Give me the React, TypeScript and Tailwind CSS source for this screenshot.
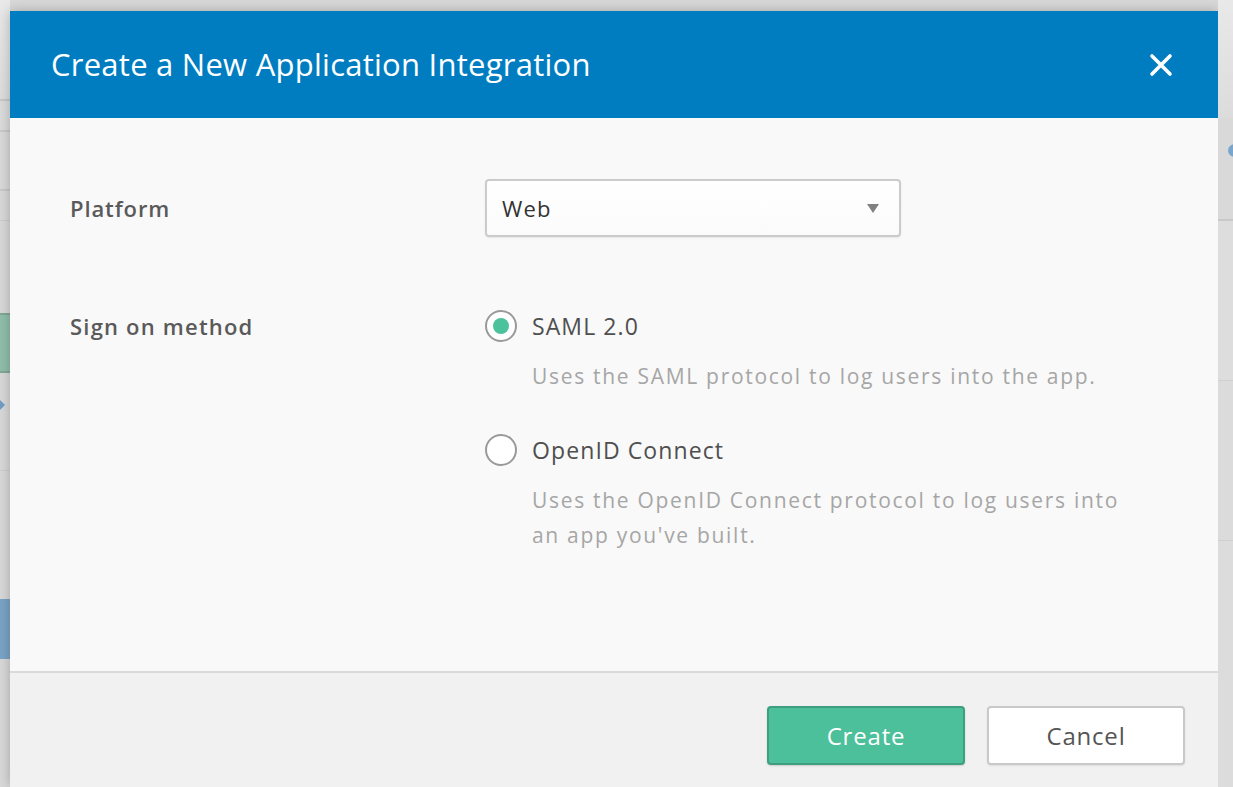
import { useState } from "react"

const options = [
  {
    id: "saml",
    label: "SAML 2.0",
    desc: "Uses the SAML protocol to log users into the app.",
  },
  {
    id: "oidc",
    label: "OpenID Connect",
    desc: "Uses the OpenID Connect protocol to log users into an app you've built.",
  },
]

function LeftStrip() {
  return (
    <div className="flex w-[10px] shrink-0 flex-col bg-[#d9d9d9]">
      <div className="h-[99px] bg-gradient-to-b from-[#e9e9e9] to-[#dedede]" />
      <div className="h-[2px] bg-[#c9c9c9]" />
      <div className="h-[29px] bg-[#dcdcdc]" />
      <div className="h-[2px] bg-[#c9c9c9]" />
      <div className="h-[57px] bg-[#dadada]" />
      <div className="h-[2px] bg-[#c9c9c9]" />
      <div className="h-[29px] bg-[#d9d9d9]" />
      <div className="h-px bg-[#cdcdcd]" />
      <div className="h-[92px]" />
      <div className="h-[60px] border-y-2 border-[#82a898] bg-[#91bfac]" />
      <div className="flex h-[97px] items-start pt-[26px]">
        <svg width="6" height="12" viewBox="0 0 6 12">
          <path d="M0 1 L5 6 L0 11 Z" fill="#6f9ec6" />
        </svg>
      </div>
      <div className="h-px bg-[#cecece]" />
      <div className="h-[128px]" />
      <div className="h-[60px] bg-[#7ba4c7]" />
      <div className="flex-1" />
    </div>
  )
}

function RightStrip() {
  return (
    <div className="flex w-[15px] shrink-0 flex-col overflow-hidden bg-[#d9d9d9]">
      <div className="h-[118px] bg-gradient-to-b from-[#e9e9e9] to-[#dcdcdc]" />
      <div className="flex h-[101px] items-start pt-[26px] pl-[10px]">
        <div className="h-[13px] w-[13px] shrink-0 rounded-full bg-[#7aa6cc]" />
      </div>
      <div className="h-[2px] bg-[#c9c9c9]" />
      <div className="h-[159px] bg-[#dddddd]" />
      <div className="h-px bg-[#d0d0d0]" />
      <div className="h-[159px] bg-[#dbdbdb]" />
      <div className="h-px bg-[#d0d0d0]" />
      <div className="flex-1 bg-[#dcdcdc]" />
    </div>
  )
}

function Radio({ checked }: { checked: boolean }) {
  return (
    <span className="flex h-[32px] w-[32px] shrink-0 items-center justify-center rounded-full border-2 border-[#999999] bg-white">
      {checked && <span className="h-[16px] w-[16px] rounded-full bg-[#4bc29b]" />}
    </span>
  )
}

export default function App() {
  const [method, setMethod] = useState("saml")

  return (
    <div
      className="flex h-[787px] w-[1233px] overflow-hidden bg-[#d9d9d9] text-[#5a5a5a]"
      style={{ fontFamily: "'Open Sans', 'Noto Sans', sans-serif" }}
    >
      <LeftStrip />

      <div className="mt-[11px] flex w-[1208px] shrink-0 flex-col shadow-[0_0_12px_rgba(0,0,0,0.25)]">
        <div className="flex h-[107px] items-center justify-between bg-[#007dc1] pl-[41px] pr-[45px]">
          <h1 className="text-[31px] font-normal tracking-[0.25px] text-white">
            Create a New Application Integration
          </h1>
          <button className="flex h-[24px] w-[24px] items-center justify-center">
            <svg width="24" height="24" viewBox="0 0 24 24">
              <path
                d="M3 3 L21 21 M21 3 L3 21"
                stroke="white"
                strokeWidth="3.6"
                strokeLinecap="round"
                fill="none"
              />
            </svg>
          </button>
        </div>

        <div className="h-[553px] bg-[#f9f9f9] px-[60px] pt-[61px]">
          <div className="grid grid-cols-[415px_1fr] items-center">
            <div className="text-[22px] font-semibold tracking-[0.9px] text-[#5a5a5a]">Platform</div>
            <div className="flex h-[58px] w-[416px] items-center justify-between rounded-[4px] border-2 border-[#cbcbcb] bg-gradient-to-b from-white to-[#fbfbfb] pl-[15px] pr-[20px] shadow-[0_1px_2px_rgba(0,0,0,0.08)]">
              <span className="text-[22px] tracking-[1.2px] text-[#333333]">Web</span>
              <svg width="12" height="9" viewBox="0 0 12 9">
                <path d="M0 0 L12 0 L6 9 Z" fill="#808080" />
              </svg>
            </div>
          </div>

          <div className="mt-[73px] grid grid-cols-[415px_1fr] items-start">
            <div className="flex h-[32px] items-center text-[22px] font-semibold tracking-[1.2px] text-[#5a5a5a]">
              Sign on method
            </div>
            <div className="flex flex-col">
              {options.map((o, i) => (
                <div
                  key={o.id}
                  className={i === 0 ? "flex flex-col" : "mt-[40px] flex flex-col"}
                  onClick={() => setMethod(o.id)}
                >
                  <div className="flex h-[32px] items-center gap-[15px]">
                    <Radio checked={method === o.id} />
                    <span className="text-[23px] tracking-[1.1px] text-[#4f4f4f]">{o.label}</span>
                  </div>
                  <p className="mt-[17px] max-w-[647px] pl-[47px] text-[21px] leading-[35px] tracking-[1.7px] text-[#a6a6a6]">
                    {o.desc}
                  </p>
                </div>
              ))}
            </div>
          </div>
        </div>

        <div className="flex flex-1 items-start justify-end gap-[22px] border-t-2 border-[#dadada] bg-[#f1f1f1] pr-[33px] pt-[33px]">
          <button className="h-[59px] w-[198px] rounded-[4px] border-2 border-[#3f9e7f] bg-[#4bc09a] text-[24px] tracking-[0.8px] text-white shadow-[0_1px_2px_rgba(0,0,0,0.15)]">
            Create
          </button>
          <button className="h-[59px] w-[198px] rounded-[4px] border-2 border-[#c9c9c9] bg-white text-[24px] tracking-[0.8px] text-[#555555] shadow-[0_1px_2px_rgba(0,0,0,0.08)]">
            Cancel
          </button>
        </div>
      </div>

      <RightStrip />
    </div>
  )
}
